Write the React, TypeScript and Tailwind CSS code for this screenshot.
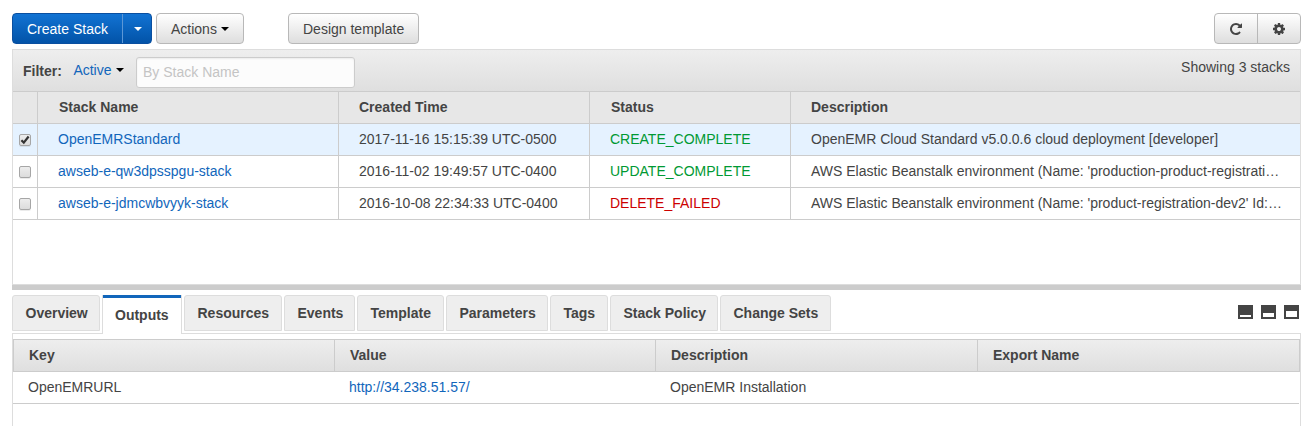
import React from "react";

const stacks = [
  { name: "OpenEMRStandard", time: "2017-11-16 15:15:39 UTC-0500", status: "CREATE_COMPLETE", description: "OpenEMR Cloud Standard v5.0.0.6 cloud deployment [developer]", checked: true },
  { name: "awseb-e-qw3dpsspgu-stack", time: "2016-11-02 19:49:57 UTC-0400", status: "UPDATE_COMPLETE", description: "AWS Elastic Beanstalk environment (Name: 'production-product-registrati…", checked: false },
  { name: "awseb-e-jdmcwbvyyk-stack", time: "2016-10-08 22:34:33 UTC-0400", status: "DELETE_FAILED", description: "AWS Elastic Beanstalk environment (Name: 'product-registration-dev2' Id:…", checked: false },
];

const tabs = [
  { label: "Overview", width: "w-[88px]" },
  { label: "Outputs", width: "w-[80px]", active: true },
  { label: "Resources", width: "w-[98px]" },
  { label: "Events", width: "w-[71px]" },
  { label: "Template", width: "w-[87px]" },
  { label: "Parameters", width: "w-[102px]" },
  { label: "Tags", width: "w-[58px]" },
  { label: "Stack Policy", width: "w-[108px]" },
  { label: "Change Sets", width: "w-[111px]" },
];

function Caret({ className = "" }: { className?: string }) {
  return (
    <svg className={`h-1 w-2 shrink-0 ${className}`} viewBox="0 0 8 4" fill="currentColor">
      <path d="M0 0h8L4 4z" />
    </svg>
  );
}

function RepeatIcon() {
  return (
    <svg className="size-[14px]" viewBox="0 0 1792 1792" fill="#444">
      <path d="M1664 256v448q0 26-19 45t-45 19h-448q-42 0-59-40-17-39 14-69l138-138q-148-137-349-137-104 0-198.500 40.500t-163.500 109.500-109.500 163.500-40.500 198.500 40.500 198.500 109.500 163.500 163.500 109.500 198.500 40.500q119 0 225-52t179-147q7-10 23-12 15 0 25 9l137 138q9 8 9.500 20.500t-7.500 22.500q-109 132-264 204.500t-327 72.500q-156 0-298-61t-245-164-164-245-61-298 61-298 164-245 245-164 298-61q147 0 284.500 55.500t244.500 156.500l130-129q29-31 70-14 39 17 39 59z" />
    </svg>
  );
}

function CogIcon() {
  return (
    <svg className="size-[14px]" viewBox="0 0 1792 1792" fill="#444">
      <path d="M1152 896q0-106-75-181t-181-75-181 75-75 181 75 181 181 75 181-75 75-181zm512-109v222q0 12-8 23t-20 13l-185 28q-19 54-39 91 35 50 107 138 10 12 10 25t-9 23q-27 37-99 108t-94 71q-12 0-26-9l-138-108q-44 23-91 38-16 136-29 186-7 28-36 28h-222q-14 0-24.500-8.500t-11.500-21.500l-28-184q-49-16-90-37l-141 107q-10 9-25 9-14 0-25-11-126-114-165-168-7-10-7-23 0-12 8-23 15-21 51-66.500t54-70.500q-27-50-41-99l-183-27q-13-2-21-12.500t-8-23.500v-222q0-12 8-23t19-13l186-28q14-46 39-92-40-57-107-138-10-12-10-24 0-10 9-23 26-36 98.500-107.500t94.500-71.500q13 0 26 10l138 107q44-23 91-38 16-136 29-186 7-28 36-28h222q14 0 24.500 8.500t11.500 21.500l28 184q49 16 90 37l142-107q9-9 24-9 13 0 25 10 129 119 165 170 7 8 7 22 0 12-8 23-15 21-51 66.500t-54 70.500q26 50 41 98l183 28q13 2 21 12.500t8 23.500z" />
    </svg>
  );
}

function Checkbox({ checked }: { checked: boolean }) {
  return (
    <span className="mt-px flex size-3 items-center justify-center rounded-[2px] border border-[#a6a6a6] bg-linear-to-b from-[#ededed] to-[#dcdcdc] shadow-[0_1px_0_rgba(0,0,0,0.08)]">
      {checked && (
        <svg className="size-[10px] shrink-0" viewBox="0 0 10 10" fill="none" stroke="#333" strokeWidth="2.2">
          <path d="M1.400 5.200 3.800 7.600 8.600 1.500" />
        </svg>
      )}
    </span>
  );
}

function PaneIcon({ fill }: { fill: string }) {
  return (
    <span className="flex h-[14px] w-[15px] items-end bg-[#444] p-[2px]">
      <span className={`w-full bg-white ${fill}`} />
    </span>
  );
}

const button = "flex h-[31px] items-center rounded-[4px] border border-[#b8b8b8] bg-linear-to-b from-white to-[#dedede]";
const stackGrid = "grid h-8 grid-cols-[25px_301px_251px_201px_1fr] border-b border-[#ccc]";
const cell = "min-w-0 border-r border-[#ccc] pl-5 leading-[31px] whitespace-nowrap";
const headCell = "min-w-0 border-r border-[#ccc] leading-[31px] whitespace-nowrap";

export default function App() {
  return (
    <div className="flex h-[426px] w-[1310px] flex-col overflow-hidden bg-white pt-[13px] pr-[9px] pl-3 font-['Liberation_Sans',Arial,sans-serif] text-[14px] text-[#444]">
      <div className="flex h-[31px] shrink-0">
        <button className="flex h-[31px] w-[140px] rounded-[4px] border border-[#0a4fa0] bg-linear-to-b from-[#1273d3] to-[#0353a8] text-white">
          <span className="flex h-full w-[110px] items-center border-r border-[#5c97d6] pt-[2px] pl-[14px]">Create Stack</span>
          <span className="flex h-full flex-1 items-center justify-center pl-px">
            <Caret />
          </span>
        </button>
        <button className={`${button} ml-1 w-[88px] pl-[14px]`}>
          <span className="pt-[2px]">Actions</span>
          <Caret className="ml-1 text-black" />
        </button>
        <button className={`${button} ml-11 w-[131px] pt-[2px] pl-[14px]`}>Design template</button>
        <div className={`${button} ml-auto w-[87px]`}>
          <span className="flex h-full w-[43px] items-center justify-center border-r border-[#b8b8b8]">
            <RepeatIcon />
          </span>
          <span className="flex flex-1 items-center justify-center">
            <CogIcon />
          </span>
        </div>
      </div>

      <section className="mt-[5px] h-[236px] shrink-0 border border-[#ddd]">
        <div className="flex h-[42px] border-b border-[#ccc] bg-linear-to-b from-[#eee] to-[#dfdfdf] pl-[10px]">
          <span className="mt-[13px] leading-4 font-bold">Filter:</span>
          <span className="mt-3 ml-[11.500px] flex h-4 items-center leading-4 text-[#1166bb]">
            Active
            <Caret className="ml-1 text-black" />
          </span>
          <span className="mt-[7px] ml-[12.500px] flex h-[31px] w-[219px] items-center rounded-[3px] border border-[#ccc] bg-[#fcfcfc] pl-[6px] text-[#c4c4c4] shadow-[inset_0_1px_2px_rgba(0,0,0,0.07)]">By Stack Name</span>
          <span className="mt-[9px] mr-[10px] ml-auto leading-4">Showing 3 stacks</span>
        </div>
        <div className={`${stackGrid} bg-[#e7e7e7] font-bold`}>
          <span className={headCell} />
          <span className={`${headCell} pl-[21px]`}>Stack Name</span>
          <span className={`${headCell} pl-5`}>Created Time</span>
          <span className={`${headCell} pl-[21px]`}>Status</span>
          <span className="pl-5 leading-[31px]">Description</span>
        </div>
        {stacks.map((s) => (
          <div key={s.name} className={`${stackGrid} ${s.checked ? "bg-[#e5f2ff]" : "bg-white"}`}>
            <span className="flex items-center border-r border-[#ccc] pl-[6px]">
              <Checkbox checked={s.checked} />
            </span>
            <span className={`${cell} text-[#1166bb]`}>{s.name}</span>
            <span className={cell}>{s.time}</span>
            <span className={`${cell} ${s.status === "DELETE_FAILED" ? "text-[#cc0000]" : "text-[#009933]"}`}>{s.status}</span>
            <span className="pl-5 leading-[31px] whitespace-nowrap">{s.description}</span>
          </div>
        ))}
      </section>
      <div className="h-[5px] shrink-0 bg-[#ccc]" />

      <nav className="mt-[5px] flex h-[39px] shrink-0 items-start border-b border-[#ddd]">
        {tabs.map((t) =>
          t.active ? (
            <div key={t.label} className={`mr-[2px] flex h-[39px] shrink-0 flex-col border-x border-[#ddd] bg-white font-bold whitespace-nowrap ${t.width}`}>
              <span className="h-[3px] bg-[#1166bb]" />
              <span className="pl-3 leading-[35px]">{t.label}</span>
            </div>
          ) : (
            <div key={t.label} className={`mr-[2px] h-9 shrink-0 rounded-t-[3px] border border-[#ddd] bg-[#eee] pl-[12.500px] leading-[35px] font-bold whitespace-nowrap ${t.width}`}>
              {t.label}
            </div>
          ),
        )}
        <div className="mt-[10px] mr-[2px] ml-auto flex gap-2">
          <PaneIcon fill="h-[2px]" />
          <PaneIcon fill="h-[4px]" />
          <PaneIcon fill="h-[6px]" />
        </div>
      </nav>

      <section className="flex-1 border-x border-[#ddd] pt-[5px]">
        <div className="grid h-[33px] w-[1287px] grid-cols-[321px_321px_322px_1fr] border border-[#ccc] bg-linear-to-b from-[#eee] to-[#dfdfdf] leading-[31px] font-bold">
          <span className="border-r border-[#ccc] pl-[15px]">Key</span>
          <span className="border-r border-[#ccc] pl-[15px]">Value</span>
          <span className="border-r border-[#ccc] pl-[15px]">Description</span>
          <span className="pl-[15px]">Export Name</span>
        </div>
        <div className="grid h-8 w-[1286px] grid-cols-[321px_321px_322px_1fr] border-b border-[#ccc] leading-[31px]">
          <span className="pl-[15px]">OpenEMRURL</span>
          <span className="pl-[15px] text-[#1166bb]">http://34.238.51.57/</span>
          <span className="pl-[15px]">OpenEMR Installation</span>
        </div>
      </section>
    </div>
  );
}
